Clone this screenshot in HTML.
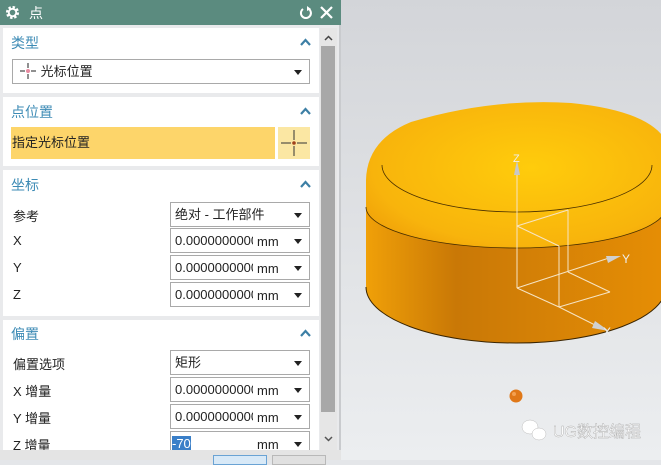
<!DOCTYPE html>
<html><head><meta charset="utf-8"><style>
*{margin:0;padding:0;box-sizing:border-box}
body{width:661px;height:460px;overflow:hidden;position:relative;background:#e4e6e9;font-family:"Liberation Sans","Noto Sans CJK SC",sans-serif;font-size:13px;color:#222}
#dlg{position:absolute;left:0;top:0;width:341px;height:460px;background:#e9eaec;border-right:2px solid #c9cbce}
#title{position:absolute;left:0;top:0;width:341px;height:25px;background:#5b8b7f;color:#fff}
.sec{position:absolute;left:3px;width:316px;background:#fff}
.hd{position:absolute;left:8px;color:#3d8bb5;font-size:14px}
.car{position:absolute;right:8px}
.box{position:absolute;height:25px;border:1px solid #a9a9a9;background:#fff;font-size:13px;line-height:23px;padding-left:4px;white-space:nowrap;overflow:hidden}
.box .mm{position:absolute;left:82px;top:1px}
.box .dd{position:absolute;right:7px;top:10px;width:0;height:0;border-left:4px solid transparent;border-right:4px solid transparent;border-top:5px solid #222}
.lb{position:absolute;left:10px;font-size:13px}
</style></head><body>
<svg style="position:absolute;left:341px;top:0" width="320" height="460">
<defs>
<linearGradient id="bg" x1="0" y1="0" x2="0" y2="1"><stop offset="0" stop-color="#d3d5d9"/><stop offset="1" stop-color="#eceef0"/></linearGradient>
<linearGradient id="wall" x1="0" y1="0" x2="1" y2="0"><stop offset="0" stop-color="#f0a008"/><stop offset=".3" stop-color="#c97806"/><stop offset="1" stop-color="#e68e05"/></linearGradient>
<radialGradient id="dome" cx=".55" cy=".45" r=".7"><stop offset="0" stop-color="#ffcc0c"/><stop offset=".75" stop-color="#f8b40c"/><stop offset="1" stop-color="#ee9c08"/></radialGradient>
</defs>
<rect width="320" height="460" fill="url(#bg)"/>
<path d="M25 200 L25 287 A150 56 0 0 0 325 287 L325 200 Z" fill="url(#wall)"/>
<path d="M25 287 A150 56 0 0 0 325 287" fill="none" stroke="#3a2400" stroke-width="1"/>
<path d="M25 207 L25 180 Q26 140 70 122 Q150 98 230 103 Q300 110 321 135 L325 207 A150 41 0 0 1 25 207 Z" fill="url(#dome)"/>
<path d="M25 207 A150 41 0 0 0 325 207" fill="none" stroke="#4a3000" stroke-width="0.8"/>
<path d="M41 165 A135 47 0 0 0 311 165" fill="none" stroke="#4a3000" stroke-width="0.8"/>
<g stroke="#f6e4c4" stroke-width="1" fill="none">
<line x1="176" y1="170" x2="176" y2="288"/>
<line x1="176" y1="226" x2="227" y2="210"/>
<line x1="227" y1="210" x2="227" y2="272"/>
<line x1="176" y1="226" x2="218" y2="246"/>
<line x1="218" y1="246" x2="218" y2="307"/>
<line x1="176" y1="288" x2="218" y2="307"/>
<line x1="176" y1="288" x2="268" y2="258"/>
<line x1="227" y1="272" x2="269" y2="292"/>
<line x1="218" y1="307" x2="269" y2="292"/>
<line x1="218" y1="307" x2="256" y2="326"/>
</g>
<polygon points="176,160 173,175 179,175" fill="#c8c8c8"/>
<polygon points="280,256 265,256 267,263" fill="#d0d0d0"/>
<polygon points="268,331 254,321 251,328" fill="#d0d0d0"/>
<text x="172" y="162" fill="#eee" font-size="11" font-family="Liberation Sans">Z</text>
<text x="281" y="263" fill="#eee" font-size="12" font-family="Liberation Sans">Y</text>
<text x="262" y="336" fill="#eee" font-size="12" font-family="Liberation Sans">X</text>
<circle cx="175" cy="396" r="6.5" fill="#e07818"/>
<circle cx="173" cy="394" r="2" fill="#f4a050"/>
<g fill="#fff" stroke="#bbb" stroke-width="0.5"><ellipse cx="189" cy="427" rx="8" ry="7"/><ellipse cx="198" cy="434" rx="7" ry="6"/></g>
<text x="212" y="437" fill="#fff" stroke="#aaa" stroke-width="0.4" font-size="16" font-family="Liberation Sans,Noto Sans CJK SC,sans-serif">UG数控编程</text>
</svg>
<div id="dlg">
<div id="title">
<svg style="position:absolute;left:5px;top:5px" width="15" height="15" viewBox="0 0 16 16"><circle cx="8" cy="8" r="5.5" fill="none" stroke="#fff" stroke-width="3" stroke-dasharray="2.5 1.8"/><circle cx="8" cy="8" r="4" fill="none" stroke="#fff" stroke-width="2"/></svg>
<span style="position:absolute;left:29px;top:3px;font-size:14px">点</span>
<svg style="position:absolute;left:299px;top:6px" width="14" height="14" viewBox="0 0 14 14"><path d="M4 3 A5 5 0 1 0 9 2.5" fill="none" stroke="#fff" stroke-width="2"/><polygon points="8,0 12,3 8,5" fill="#fff"/></svg>
<svg style="position:absolute;left:320px;top:6px" width="13" height="13" viewBox="0 0 13 13"><path d="M1 1L12 12M12 1L1 12" stroke="#fff" stroke-width="2.2"/></svg>
</div>
<div style="position:absolute;left:320px;top:28px;width:17px;height:422px;background:#e6e6e6"></div>
<div style="position:absolute;left:321px;top:46px;width:14px;height:366px;background:#a8a8a8"></div>
<svg style="position:absolute;left:324px;top:35px" width="9" height="6"><path d="M1 5L4.5 1.5L8 5" stroke="#444" stroke-width="1.5" fill="none"/></svg>
<svg style="position:absolute;left:324px;top:436px" width="9" height="6"><path d="M1 1L4.5 4.5L8 1" stroke="#555" stroke-width="1.5" fill="none"/></svg>

<div class="sec" style="top:28px;height:65px">
<span class="hd" style="top:5px">类型</span><svg class="car" style="top:10px" width="11" height="8"><path d="M1 7L5.5 2L10 7" stroke="#3d7fa5" stroke-width="2.2" fill="none"/></svg>
<div class="box" style="left:9px;top:31px;width:298px;padding-left:6px">
<svg width="18" height="18" style="vertical-align:-4px" viewBox="0 0 18 18"><path d="M1 9h5M12 9h5M9 1v5M9 12v5" stroke="#222"/><circle cx="9" cy="9" r="2" fill="#e88aa0"/></svg> 光标位置<span class="dd"></span></div>
</div>
<div class="sec" style="top:97px;height:69px">
<span class="hd" style="top:5px">点位置</span><svg class="car" style="top:10px" width="11" height="8"><path d="M1 7L5.5 2L10 7" stroke="#3d7fa5" stroke-width="2.2" fill="none"/></svg>
<div style="position:absolute;left:8px;top:30px;width:264px;height:32px;background:#fdd56a;line-height:32px;padding-left:1px">指定光标位置</div>
<div style="position:absolute;left:275px;top:30px;width:32px;height:32px;background:#fbe7a3"><svg width="32" height="32" viewBox="0 0 32 32"><path d="M3 16h10M19 16h10M16 3v10M16 19v10" stroke="#333"/><circle cx="16" cy="16" r="1.8" fill="#a0401a"/></svg></div>
</div>
<div class="sec" style="top:170px;height:146px">
<span class="hd" style="top:5px">坐标</span><svg class="car" style="top:10px" width="11" height="8"><path d="M1 7L5.5 2L10 7" stroke="#3d7fa5" stroke-width="2.2" fill="none"/></svg>
<span class="lb" style="top:36px">参考</span>
<div class="box" style="left:167px;top:32px;width:140px">绝对 - 工作部件<span class="dd"></span></div>
<span class="lb" style="top:63px">X</span>
<div class="box" style="left:167px;top:58px;width:140px">0.0000000000<span class="mm" style="background:#fff;padding:0 4px">mm</span><span class="dd"></span></div>
<span class="lb" style="top:90px">Y</span>
<div class="box" style="left:167px;top:85px;width:140px">0.0000000000<span class="mm" style="background:#fff;padding:0 4px">mm</span><span class="dd"></span></div>
<span class="lb" style="top:117px">Z</span>
<div class="box" style="left:167px;top:112px;width:140px">0.0000000000<span class="mm" style="background:#fff;padding:0 4px">mm</span><span class="dd"></span></div>
</div>
<div class="sec" style="top:320px;height:130px">
<span class="hd" style="top:4px">偏置</span><svg class="car" style="top:9px" width="11" height="8"><path d="M1 7L5.5 2L10 7" stroke="#3d7fa5" stroke-width="2.2" fill="none"/></svg>
<span class="lb" style="top:34px">偏置选项</span>
<div class="box" style="left:167px;top:30px;width:140px">矩形<span class="dd"></span></div>
<span class="lb" style="top:61px">X 增量</span>
<div class="box" style="left:167px;top:57px;width:140px">0.0000000000<span class="mm" style="background:#fff;padding:0 4px">mm</span><span class="dd"></span></div>
<span class="lb" style="top:88px">Y 增量</span>
<div class="box" style="left:167px;top:84px;width:140px">0.0000000000<span class="mm" style="background:#fff;padding:0 4px">mm</span><span class="dd"></span></div>
<span class="lb" style="top:115px">Z 增量</span>
<div class="box" style="left:167px;top:111px;width:140px"><span style="background:#3a7fc8;color:#fff;margin-left:-3px">-70</span><span class="mm" style="padding:0 4px">mm</span><span class="dd"></span></div>
</div>
<div style="position:absolute;left:0;top:450px;width:341px;height:10px;background:#e4e4e4"></div>
<div style="position:absolute;left:213px;top:455px;width:54px;height:10px;background:#d8e9f7;border:1px solid #6aa3d4"></div>
<div style="position:absolute;left:272px;top:455px;width:54px;height:10px;background:#e0e0e0;border:1px solid #b8b8b8"></div>
</div>
</body></html>
